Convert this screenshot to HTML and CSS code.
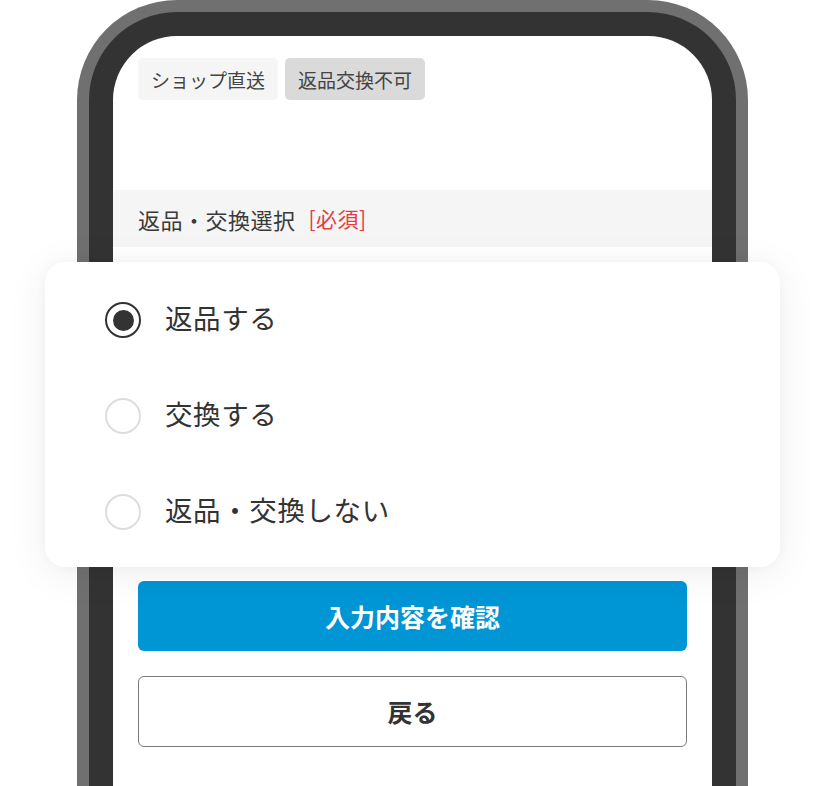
FILE: index.html
```html
<!DOCTYPE html>
<html lang="ja">
<head>
<meta charset="utf-8">
<title>返品・交換選択</title>
<link rel="stylesheet" href="styles.css">
</head>
<body>
<div class="stage">
  <div class="phone">
    <div class="bezel">
      <div class="screen">
        <div class="tags">
          <span class="tag">ショップ直送</span>
          <span class="tag tag-dark">返品交換不可</span>
        </div>
        <div class="section-head">
          <span class="section-title">返品・交換選択</span>
          <span class="required">[必須]</span>
        </div>
        <div class="section-body"></div>
        <div class="actions">
          <button class="btn btn-primary" type="button">入力内容を確認</button>
          <button class="btn btn-outline" type="button">戻る</button>
        </div>
      </div>
    </div>
  </div>

  <div class="choice-card">
    <label class="choice">
      <span class="radio radio-on"></span>
      <span class="choice-text">返品する</span>
    </label>
    <label class="choice">
      <span class="radio"></span>
      <span class="choice-text">交換する</span>
    </label>
    <label class="choice">
      <span class="radio"></span>
      <span class="choice-text">返品・交換しない</span>
    </label>
  </div>
</div>
</body>
</html>
```

FILE: styles.css
```css
* {
  box-sizing: border-box;
}

html, body {
  margin: 0;
  padding: 0;
  background: #ffffff;
  overflow: hidden;
}

body {
  font-family: "Noto Sans CJK JP", "Noto Sans", sans-serif;
  color: #333333;
}

.stage {
  position: relative;
  width: 825px;
  height: 786px;
  overflow: hidden;
}

/* phone frame: light outer rim, dark bezel, white screen */
.phone {
  margin-left: 77px;
  width: 671px;
  height: 820px;
  padding: 12px 12px 0;
  background: #707070;
  border-radius: 100px 100px 0 0;
}

.bezel {
  height: 100%;
  padding: 24px 24px 0;
  background: #333333;
  border-radius: 88px 88px 0 0;
}

.screen {
  height: 100%;
  background: #ffffff;
  border-radius: 64px 64px 0 0;
  padding-top: 22px;
  display: flex;
  flex-direction: column;
}

.tags {
  display: flex;
  gap: 7px;
  padding: 0 25px;
}

.tag {
  height: 42px;
  padding: 0 13px;
  display: flex;
  align-items: center;
  font-size: 19px;
  line-height: 1;
  color: #444444;
  background: #f5f5f5;
  border-radius: 5px;
}

.tag-dark {
  background: #dadada;
}

.section-head {
  margin-top: 90px;
  height: 57px;
  padding: 0 25px;
  background: #f5f5f5;
  display: flex;
  align-items: center;
  gap: 13px;
  font-size: 22px;
  line-height: 1;
  letter-spacing: 0.5px;
}

.section-title {
  color: #3a3a3a;
}

.required {
  color: #e83a3f;
  font-size: 21px;
}

.section-body {
  height: 334px;
}

.actions {
  padding: 0 25px;
  display: flex;
  flex-direction: column;
  gap: 25px;
}

.btn {
  display: flex;
  align-items: center;
  justify-content: center;
  width: 100%;
  font-family: inherit;
  font-size: 25px;
  font-weight: 700;
  line-height: 1;
  border-radius: 6px;
  padding: 0;
  cursor: pointer;
}

.btn-primary {
  height: 70px;
  background: #0095d5;
  border: none;
  color: #ffffff;
}

.btn-outline {
  height: 71px;
  background: #ffffff;
  border: 1.5px solid #7a7a7a;
  color: #333333;
}

/* enlarged option list floating over the screen */
.choice-card {
  position: absolute;
  left: 45px;
  top: 262px;
  width: 735px;
  height: 305px;
  padding: 10px 0 7px 60px;
  background: #ffffff;
  border-radius: 20px;
  box-shadow: 0 6px 40px rgba(0, 0, 0, 0.07), 0 0 12px rgba(0, 0, 0, 0.03);
  display: flex;
  flex-direction: column;
}

.choice {
  height: 96px;
  display: flex;
  align-items: center;
  gap: 24px;
}

.radio {
  width: 36px;
  height: 36px;
  border-radius: 50%;
  border: 2px solid #dddddd;
  display: flex;
  align-items: center;
  justify-content: center;
  flex: none;
}

.radio-on {
  border-color: #333333;
}

.radio-on::after {
  content: "";
  width: 21px;
  height: 21px;
  border-radius: 50%;
  background: #333333;
}

.choice-text {
  font-size: 27.5px;
  line-height: 1;
  letter-spacing: 0.6px;
  margin-top: -4px;
  color: #333333;
}
```
